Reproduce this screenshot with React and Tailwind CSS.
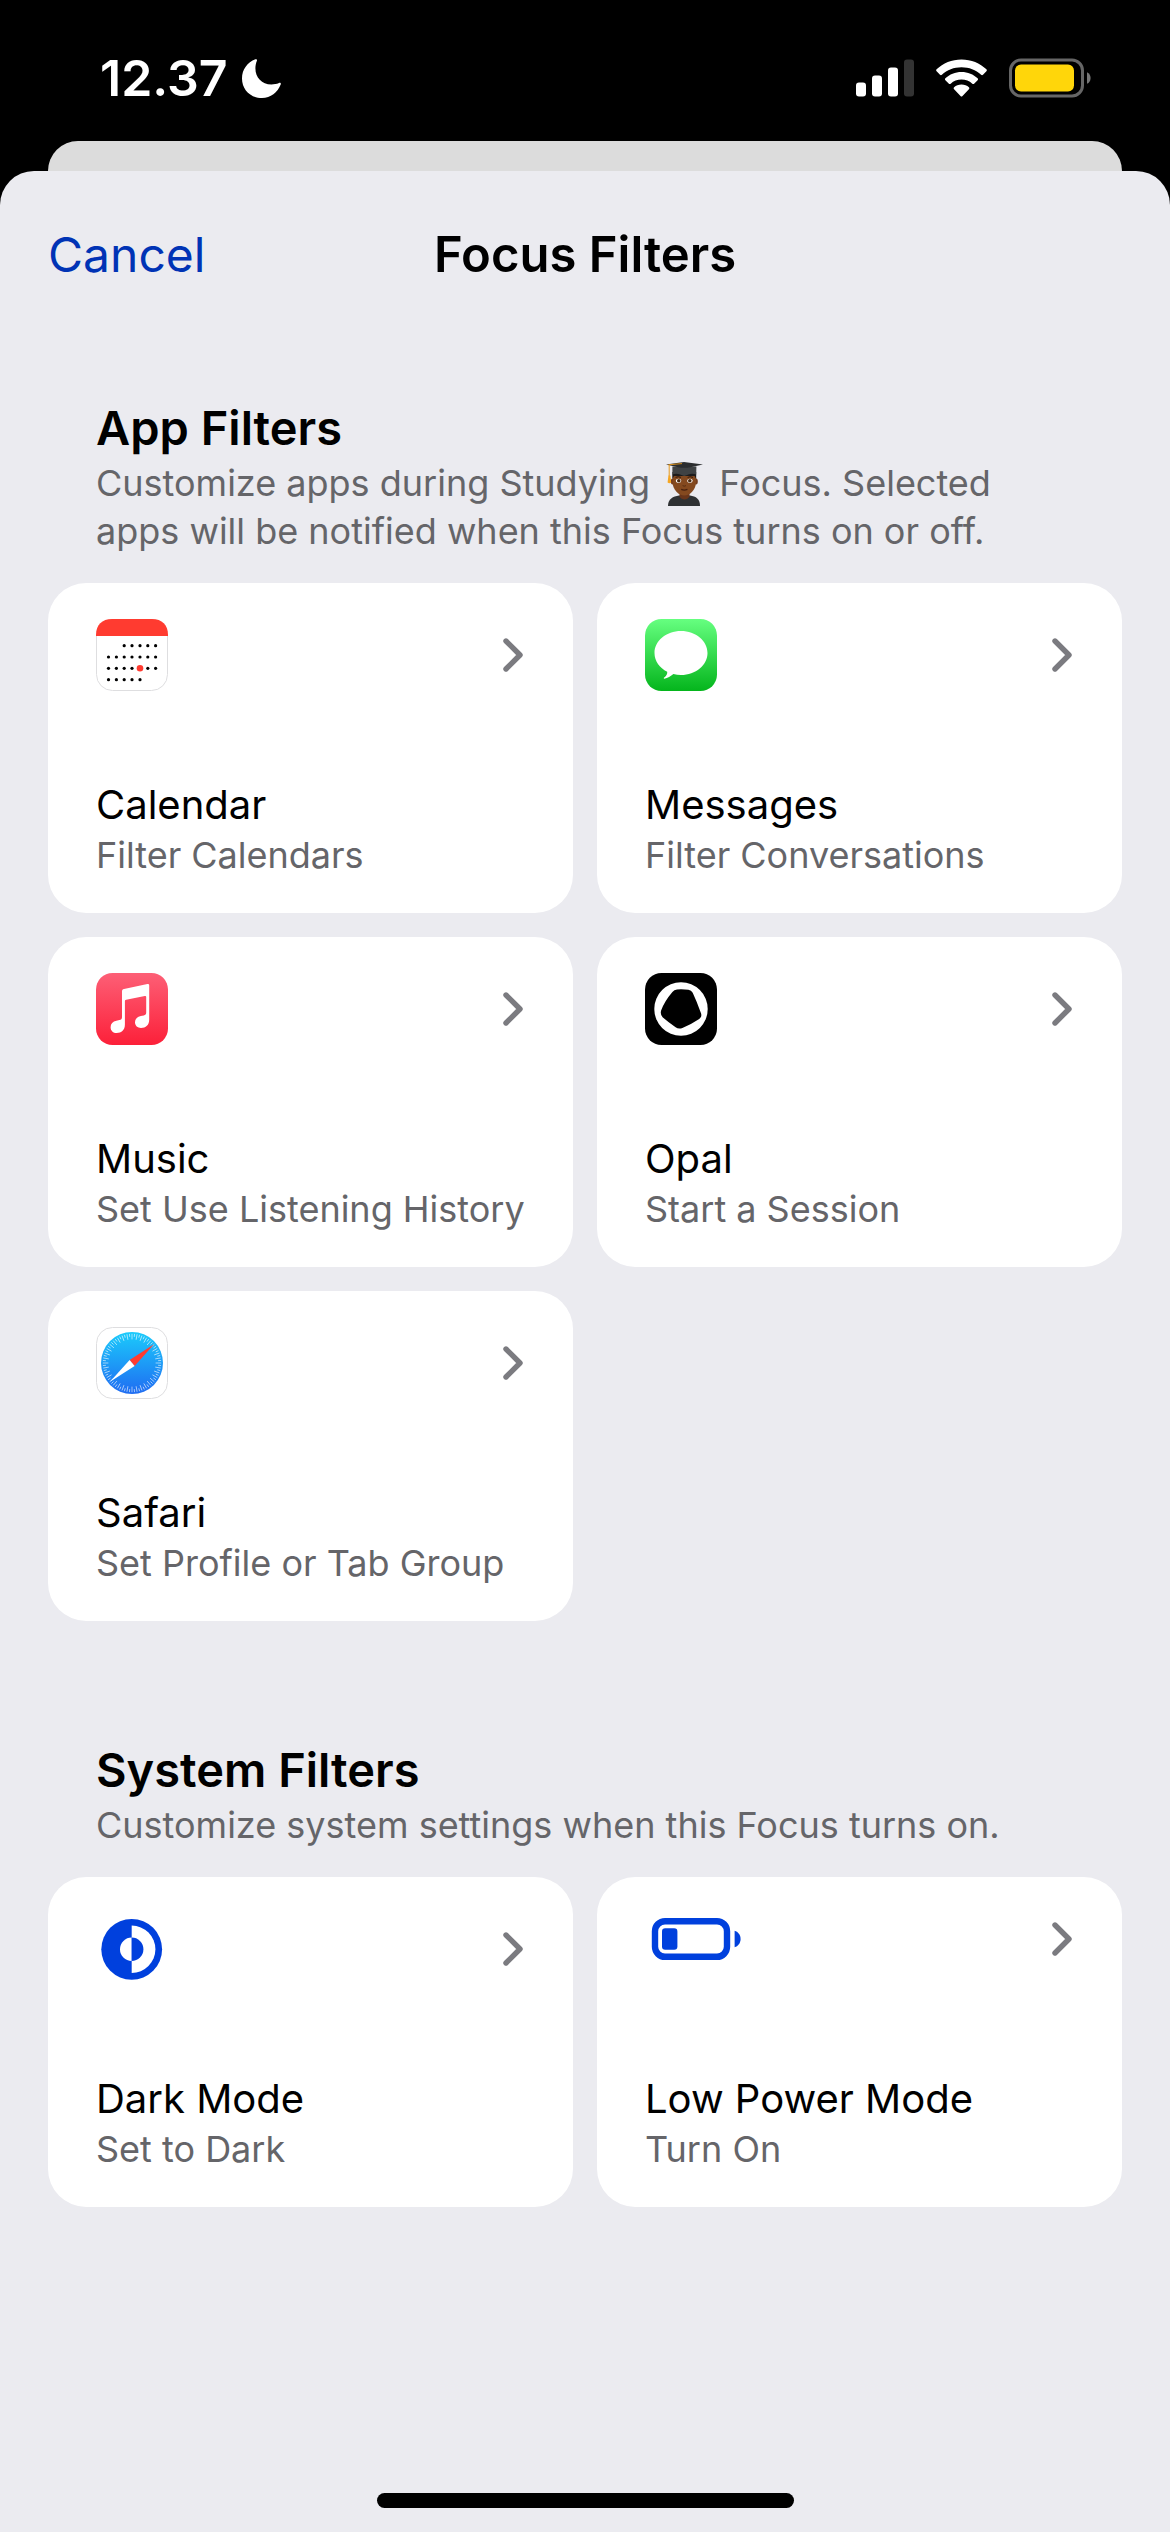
import React from "react";

const BLUE = "#0040dd";

function CalendarIcon() {
    const columns = [12.5, 20.4, 28.2, 36, 44, 51.8, 59.6];
    const rows = [
        { y: 26.7, from: 2, to: 6 },
        { y: 38, from: 0, to: 6 },
        { y: 49.3, from: 0, to: 6 },
        { y: 60.7, from: 0, to: 4 },
    ];

    return (
        <svg viewBox="0 0 72 72" className="size-[72px]" aria-hidden="true">
            <rect x="0.5" y="0.5" width="71" height="71" rx="16" fill="#fff" stroke="#dedee0" />
            <path d="M0 17V16C0 6 6 0 16 0H56C66 0 72 6 72 16V17Z" fill="#ff3b30" />
            {rows.map(row =>
                columns.slice(row.from, row.to + 1).map(x => (
                    <circle key={`${x}-${row.y}`} cx={x} cy={row.y} r="1.6" fill="#000" />
                ))
            )}
            <circle cx="44" cy="49.3" r="3.3" fill="#ff3b30" />
        </svg>
    );
}

function MessagesIcon() {
    return (
        <svg viewBox="0 0 72 72" className="size-[72px]" aria-hidden="true">
            <defs>
                <linearGradient id="messages-bg" x1="0" y1="0" x2="0" y2="1">
                    <stop offset="0" stopColor="#66ff80" />
                    <stop offset="1" stopColor="#04b51c" />
                </linearGradient>
            </defs>
            <rect width="72" height="72" rx="16.5" fill="url(#messages-bg)" />
            <path
                d="M36 12C50.8 12 62.5 21.8 62.5 34S50.8 56 36 56C33.4 56 30.8 55.7 28.4 55.1C25.8 57.3 22.6 59.2 19.4 59.7C18.6 59.7 18.6 59 19.2 58.6C21.4 56.9 22.6 54.6 22.2 52.8C14.6 48.9 9.5 42 9.5 34C9.5 21.8 21.2 12 36 12Z"
                fill="#fff"
            />
        </svg>
    );
}

function MusicIcon() {
    return (
        <svg viewBox="0 0 72 72" className="size-[72px]" aria-hidden="true">
            <defs>
                <linearGradient id="music-bg" x1="0" y1="0" x2="0" y2="1">
                    <stop offset="0" stopColor="#fd5f76" />
                    <stop offset="1" stopColor="#fc2039" />
                </linearGradient>
            </defs>
            <rect width="72" height="72" rx="16.5" fill="url(#music-bg)" />
            <path
                d="M51.4 11.1L28 16C26.7 16.3 26 17 26 18.4V44C26 46 25.2 46.7 23.4 47.1L20.4 47.8C16.8 48.6 14.6 50.8 14.6 54.2C14.6 57.7 17.2 60 20.6 60C25.6 60 28.9 57 28.9 51.5V28.4C28.9 27.4 29.2 27 30.2 26.8L48.8 23C49.8 22.8 50.2 23.1 50.2 24V39.4C50.2 41.2 49.4 42 47.8 42.4L44.8 43C41.2 43.8 39 46 39 49.3C39 52.8 41.6 55 45 55C49.8 55 53.2 52 53.2 46.8V12.6C53.2 11.4 52.6 10.9 51.4 11.1Z"
                fill="#fff"
            />
        </svg>
    );
}

function OpalIcon() {
    return (
        <svg viewBox="0 0 72 72" className="size-[72px]" aria-hidden="true">
            <rect width="72" height="72" rx="16.5" fill="#000" />
            <circle cx="36" cy="36" r="26.7" fill="#fff" />
            <path
                d="M32 16.4Q37 15.9 43.4 16.7Q46.4 17.2 47.7 19.8Q52 29 56 40.2Q57.2 43.8 54.2 46Q46.6 51.2 37.4 54.9Q33.6 56.4 30.6 54.2Q23.6 49.4 17.6 44.2Q15 41.6 16.1 37.6Q19.2 28.6 27.4 19Q29.2 16.8 32 16.4Z"
                fill="#000"
            />
        </svg>
    );
}

function SafariIcon() {
    const ticks = Array.from({ length: 72 }, (_, i) => i);

    return (
        <svg viewBox="0 0 72 72" className="size-[72px]" aria-hidden="true">
            <defs>
                <linearGradient id="safari-bg" x1="0" y1="0" x2="0" y2="1">
                    <stop offset="0" stopColor="#1bcbfb" />
                    <stop offset="1" stopColor="#1f6cf2" />
                </linearGradient>
            </defs>
            <rect x="0.5" y="0.5" width="71" height="71" rx="16" fill="#fff" stroke="#dedee0" />
            <circle cx="36" cy="36" r="31" fill="url(#safari-bg)" />
            {ticks.map(i => (
                <line
                    key={i}
                    x1="36"
                    y1="6.8"
                    x2="36"
                    y2={i % 2 === 0 ? "12.4" : "9.8"}
                    stroke="#fff"
                    strokeWidth="0.7"
                    opacity="0.8"
                    transform={`rotate(${i * 5} 36 36)`}
                />
            ))}
            <path d="M58 17.2L33.6 33L38.6 39Z" fill="#ff3b30" />
            <path d="M14 54.8L33.6 33L38.6 39Z" fill="#fff" />
        </svg>
    );
}

function DarkModeIcon() {
    return (
        <svg viewBox="0 0 72 72" className="size-[72px]" aria-hidden="true">
            <circle cx="35.7" cy="36.3" r="30.4" fill={BLUE} />
            <path d="M35.7 12.6A23.7 23.7 0 0 1 35.7 60Z" fill="#fff" />
            <path d="M35.7 24.6A11.7 11.7 0 0 0 35.7 48Z" fill="#fff" />
            <path d="M35.7 24.6A11.7 11.7 0 0 1 35.7 48Z" fill={BLUE} />
        </svg>
    );
}

function LowPowerIcon() {
    return (
        <svg viewBox="0 0 96 52" className="h-[52px] w-24" aria-hidden="true">
            <rect x="10" y="8.2" width="72" height="35.6" rx="10" fill="none" stroke={BLUE} strokeWidth="6.4" />
            <rect x="17" y="15.2" width="15.4" height="21.6" rx="3.2" fill={BLUE} />
            <path d="M89.6 17.8C93 18.6 95.6 22 95.6 26S93 33.4 89.6 34.2Z" fill={BLUE} />
        </svg>
    );
}

function StudentEmoji() {
    return (
        <svg
            viewBox="0 0 37 44"
            className="mx-1.5 inline-block h-11 w-[37px] align-[-10px]"
            role="img"
            aria-label="student"
        >
            <path d="M2 44C2 37 7 34.5 13 33.6H24C30 34.5 34 37 34 44Z" fill="#2f3133" />
            <path d="M13.5 30H23.5V34.4C21.5 38.4 15.5 38.4 13.5 34.4Z" fill="#69351a" />
            <ellipse cx="6.6" cy="19.6" rx="1.8" ry="3" fill="#733c1e" />
            <ellipse cx="30" cy="19.6" rx="1.8" ry="3" fill="#733c1e" />
            <path d="M6.6 12H30V20C30 28 23.6 33.6 18.3 33.6S6.6 28 6.6 20Z" fill="#84491f" />
            <path d="M6.4 17V10H30.2V17L28.6 14H8Z" fill="#1d1c1d" />
            <ellipse cx="12.6" cy="18.8" rx="2.7" ry="2.1" fill="#fff" />
            <ellipse cx="24" cy="18.8" rx="2.7" ry="2.1" fill="#fff" />
            <circle cx="12.8" cy="18.8" r="1.8" fill="#4a2a12" />
            <circle cx="23.8" cy="18.8" r="1.8" fill="#4a2a12" />
            <path d="M9.6 15.4Q12.4 14 15 15.4M21.6 15.4Q24.2 14 27 15.4" fill="none" stroke="#2a1408" strokeWidth="0.9" />
            <path d="M16.6 23.6Q18.3 24.8 20 23.6" fill="none" stroke="#54290f" strokeWidth="0.9" />
            <path d="M15.2 27.4Q18.3 28.8 21.4 27.4" fill="none" stroke="#46200f" strokeWidth="1.2" />
            <path d="M6.4 4.4L30.4 4.4L30.2 12.6C25 10.4 22.4 13 18.3 14C14.2 13 11.4 10.4 6.4 12.6Z" fill="#3f4244" />
            <path d="M0 2.4L18 0L37 2.4L24.4 5.2Q18.3 6.2 12 5.2Z" fill="#2b2d2f" />
            <path d="M2.4 2.8L16 1.6" stroke="#d68d1c" strokeWidth="1" fill="none" />
            <path d="M3.2 2.8V14" stroke="#e79a1d" strokeWidth="1" fill="none" />
            <path d="M2.4 13.4H4.4L5.2 20.4Q3.4 22 1.6 20.4Z" fill="#f5a623" />
        </svg>
    );
}

function Chevron() {
    return (
        <svg viewBox="0 0 20 34" className="h-[34px] w-5 shrink-0" aria-hidden="true">
            <path
                d="M3 3L17 17L3 31"
                fill="none"
                stroke="#7b7b80"
                strokeWidth="5.4"
                strokeLinecap="round"
                strokeLinejoin="round"
            />
        </svg>
    );
}

const appFilters = [
    { name: "Calendar", detail: "Filter Calendars", Icon: CalendarIcon },
    { name: "Messages", detail: "Filter Conversations", Icon: MessagesIcon },
    { name: "Music", detail: "Set Use Listening History", Icon: MusicIcon },
    { name: "Opal", detail: "Start a Session", Icon: OpalIcon },
    { name: "Safari", detail: "Set Profile or Tab Group", Icon: SafariIcon },
];

const systemFilters = [
    { name: "Dark Mode", detail: "Set to Dark", Icon: DarkModeIcon },
    { name: "Low Power Mode", detail: "Turn On", Icon: LowPowerIcon },
];

function FilterCard({ filter }) {
    const { name, detail, Icon } = filter;

    return (
        <button
            type="button"
            className="flex min-h-[330px] flex-col justify-between rounded-[38px] bg-white pt-9 pr-[50px] pb-[34px] pl-12 text-left"
        >
            <span className="flex w-full items-center justify-between">
                <Icon />
                <Chevron />
            </span>
            <span className="block whitespace-nowrap">
                <span className="block text-[40px] leading-[52px] text-black">{name}</span>
                <span className="block text-[36px] leading-[48px] text-[#656569]">{detail}</span>
            </span>
        </button>
    );
}

function FilterSection({ title, description, filters }) {
    return (
        <section>
            <div className="px-12">
                <h2 className="text-[47px] leading-[62px] font-semibold text-black">{title}</h2>
                <p className="text-[36px] leading-[48px] text-[#656569]">{description}</p>
            </div>
            <div className="mt-7 grid grid-cols-2 gap-6">
                {filters.map(filter => (
                    <FilterCard key={filter.name} filter={filter} />
                ))}
            </div>
        </section>
    );
}

function StatusBar() {
    return (
        <div className="flex h-[141px] items-start justify-between pt-12 pr-[79px] pl-[100px] text-white">
            <div className="flex items-center gap-3.5">
                <span className="text-[50px] leading-[60px] font-semibold">12.37</span>
                <svg viewBox="0 0 39 39" className="size-[39px]" aria-hidden="true">
                    <path
                        d="M13.4 0.3C14.6 -0.2 15.4 0.5 14.9 1.8C13.9 4.2 13.4 6.6 13.4 9.2C13.4 18.6 19.8 25.4 29.4 25.4C32.2 25.4 34.6 25 37 24C38.4 23.5 39.2 24.3 38.7 25.6C35.6 33.6 28.6 39 20 39C8.6 39 0 30.6 0 19.4C0 10.6 5.4 3.4 13.4 0.3Z"
                        fill="#fff"
                    />
                </svg>
            </div>
            <div className="flex h-[60px] items-center gap-[22px]">
                <svg viewBox="0 0 58 38" className="h-[38px] w-[58px]" aria-hidden="true">
                    <rect x="0" y="23.5" width="10" height="14" rx="3" fill="#fff" />
                    <rect x="16" y="16.5" width="10" height="21" rx="3" fill="#fff" />
                    <rect x="32" y="8.5" width="10" height="29" rx="3" fill="#fff" />
                    <rect x="48" y="0.5" width="10" height="37" rx="3" fill="#333" />
                </svg>
                <svg viewBox="0 0 51 38" className="h-[38px] w-[51px]" aria-hidden="true">
                    <path
                        d="M25.5 0.5C35.2 0.5 44 4.2 50.4 10.3C51 10.9 51 11.7 50.4 12.3L47 15.7C46.4 16.3 45.7 16.3 45.1 15.7C39.9 10.9 33.1 8.2 25.5 8.2S11.1 10.9 5.9 15.7C5.3 16.3 4.6 16.3 4 15.7L0.6 12.3C0 11.7 0 10.9 0.6 10.3C7 4.2 15.8 0.5 25.5 0.5Z"
                        fill="#fff"
                    />
                    <path
                        d="M25.5 13C31.8 13 37.4 15.4 41.6 19.3C42.2 19.9 42.2 20.6 41.6 21.2L38.1 24.7C37.5 25.2 36.9 25.2 36.3 24.7C33.4 22.1 29.7 20.6 25.5 20.6S17.6 22.1 14.7 24.7C14.1 25.2 13.5 25.2 12.9 24.7L9.4 21.2C8.8 20.6 8.8 19.9 9.4 19.3C13.6 15.4 19.2 13 25.5 13Z"
                        fill="#fff"
                    />
                    <path
                        d="M25.5 25.6C28.4 25.6 31 26.6 32.9 28.3C33.5 28.9 33.5 29.6 32.9 30.2L26.5 37C25.8 37.7 25.2 37.7 24.5 37L18.1 30.2C17.5 29.6 17.5 28.9 18.1 28.3C20 26.6 22.6 25.6 25.5 25.6Z"
                        fill="#fff"
                    />
                </svg>
                <svg viewBox="0 0 82 40" className="h-10 w-[82px]" aria-hidden="true">
                    <rect x="1.5" y="2" width="72" height="36" rx="10.5" fill="none" stroke="#666" strokeWidth="3" />
                    <rect x="6" y="6.5" width="59" height="27" rx="6" fill="#ffd60a" />
                    <path d="M78 14.2C80.2 15 81.6 17.4 81.6 20S80.2 25 78 25.8Z" fill="#777" />
                </svg>
            </div>
        </div>
    );
}

export default function App() {
    return (
        <div className="flex min-h-screen flex-col bg-black font-[Inter,'Liberation_Sans',sans-serif]">
            <StatusBar />
            <div className="mx-12 h-[30px] rounded-t-[30px] bg-[#dcdcdc]"></div>
            <div className="flex flex-1 flex-col rounded-t-[34px] bg-[#ebebf0]">
                <header className="grid grid-cols-[1fr_auto_1fr] items-center px-12 pt-[54px]">
                    <button type="button" className="justify-self-start text-[48px] leading-[60px] text-[#0033b5]">
                        Cancel
                    </button>
                    <h1 className="text-[49px] leading-[60px] font-semibold text-black">Focus Filters</h1>
                </header>
                <main className="flex flex-1 flex-col gap-[118px] px-12 pt-28">
                    <FilterSection
                        title="App Filters"
                        description={
                            <>
                                Customize apps during Studying <StudentEmoji /> Focus. Selected
                                <br />
                                apps will be notified when this Focus turns on or off.
                            </>
                        }
                        filters={appFilters}
                    />
                    <FilterSection
                        title="System Filters"
                        description="Customize system settings when this Focus turns on."
                        filters={systemFilters}
                    />
                </main>
                <div className="flex justify-center pb-6">
                    <div className="h-[15px] w-[417px] rounded-full bg-black"></div>
                </div>
            </div>
        </div>
    );
}
